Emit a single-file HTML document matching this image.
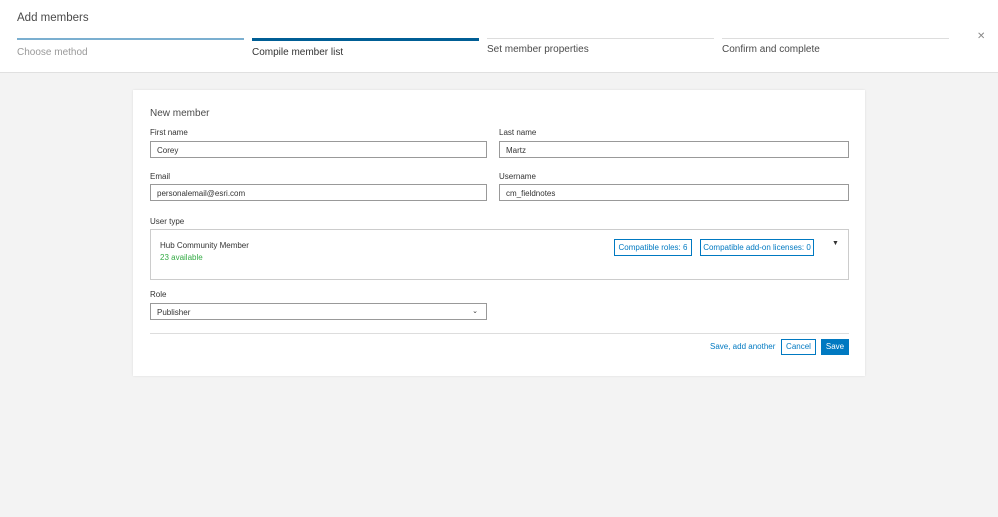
<!DOCTYPE html>
<html><head><style>
*{box-sizing:border-box;margin:0;padding:0}
body{width:998px;height:517px;background:#f3f3f3;font-family:"Liberation Sans",sans-serif;color:#4a4a4a;position:relative;overflow:hidden}
.hdr{position:absolute;left:0;top:0;width:998px;height:73px;background:#fff;border-bottom:1px solid #e0e0e0}
.t{position:absolute;left:17px;top:12px;font-size:11.5px;color:#4a4a4a}
.step{position:absolute;top:38px;width:227px;font-size:10px}
.step .bar{height:2px;background:#ddd}
.a{position:absolute;font-size:8px;color:#333}
.in{position:absolute;height:17px;border:1px solid #999;font-size:8px;padding:4px 6px;color:#333}
.b{position:absolute;border:1px solid #0079c1;color:#0079c1;font-size:8px;height:17px;line-height:15px;text-align:center;white-space:nowrap}
.card{position:absolute;left:133px;top:90px;width:732px;height:286px;background:#fff;box-shadow:0 0 2px rgba(0,0,0,.1)}
</style></head><body>
<div class="hdr">
<div class="t">Add members</div>
<div class="step" style="left:17px"><div class="bar" style="background:#7bafd0"></div><div style="color:#999;margin-top:7px">Choose method</div></div>
<div class="step" style="left:252px"><div class="bar" style="background:#005e95;height:3px"></div><div style="color:#333;margin-top:6px">Compile member list</div></div>
<div class="step" style="left:487px"><div class="bar" style="height:1px"></div><div style="margin-top:5px">Set member properties</div></div>
<div class="step" style="left:722px"><div class="bar" style="height:1px"></div><div style="margin-top:5px">Confirm and complete</div></div>
<div style="position:absolute;left:977px;top:31px;font-size:10px;color:#888">✕</div>
</div>
<div class="card">
<div class="a" style="left:17px;top:18px;font-size:10px;color:#4a4a4a">New member</div>
<div class="a" style="left:17px;top:38px">First name</div>
<div class="in" style="left:17px;top:51px;width:337px">Corey</div>
<div class="a" style="left:366px;top:38px">Last name</div>
<div class="in" style="left:366px;top:51px;width:350px">Martz</div>
<div class="a" style="left:17px;top:82px">Email</div>
<div class="in" style="left:17px;top:94px;width:337px">personalemail@esri.com</div>
<div class="a" style="left:366px;top:82px">Username</div>
<div class="in" style="left:366px;top:94px;width:350px">cm_fieldnotes</div>
<div class="a" style="left:17px;top:127px">User type</div>
<div style="position:absolute;left:17px;top:139px;width:699px;height:51px;border:1px solid #ccc"></div>
<div class="a" style="left:27px;top:151px">Hub Community Member</div>
<div class="a" style="left:27px;top:163px;color:#35ac46">23 available</div>
<div class="b" style="left:481px;top:149px;width:78px">Compatible roles: 6</div>
<div class="b" style="left:567px;top:149px;width:114px">Compatible add-on licenses: 0</div>
<div class="a" style="left:699px;top:150px;font-size:7px">▼</div>
<div class="a" style="left:17px;top:200px">Role</div>
<div class="in" style="left:17px;top:213px;width:337px">Publisher<span style="position:absolute;right:8px;top:3px;font-size:7px">⌄</span></div>
<div style="position:absolute;left:17px;top:243px;width:699px;height:1px;background:#ddd"></div>
<div class="a" style="left:577px;top:252px;color:#0079c1">Save, add another</div>
<div class="b" style="left:648px;top:249px;width:35px;height:16px;line-height:14px">Cancel</div>
<div class="b" style="left:688px;top:249px;width:28px;height:16px;line-height:14px;background:#0079c1;color:#fff">Save</div>
</div>
</body></html>
